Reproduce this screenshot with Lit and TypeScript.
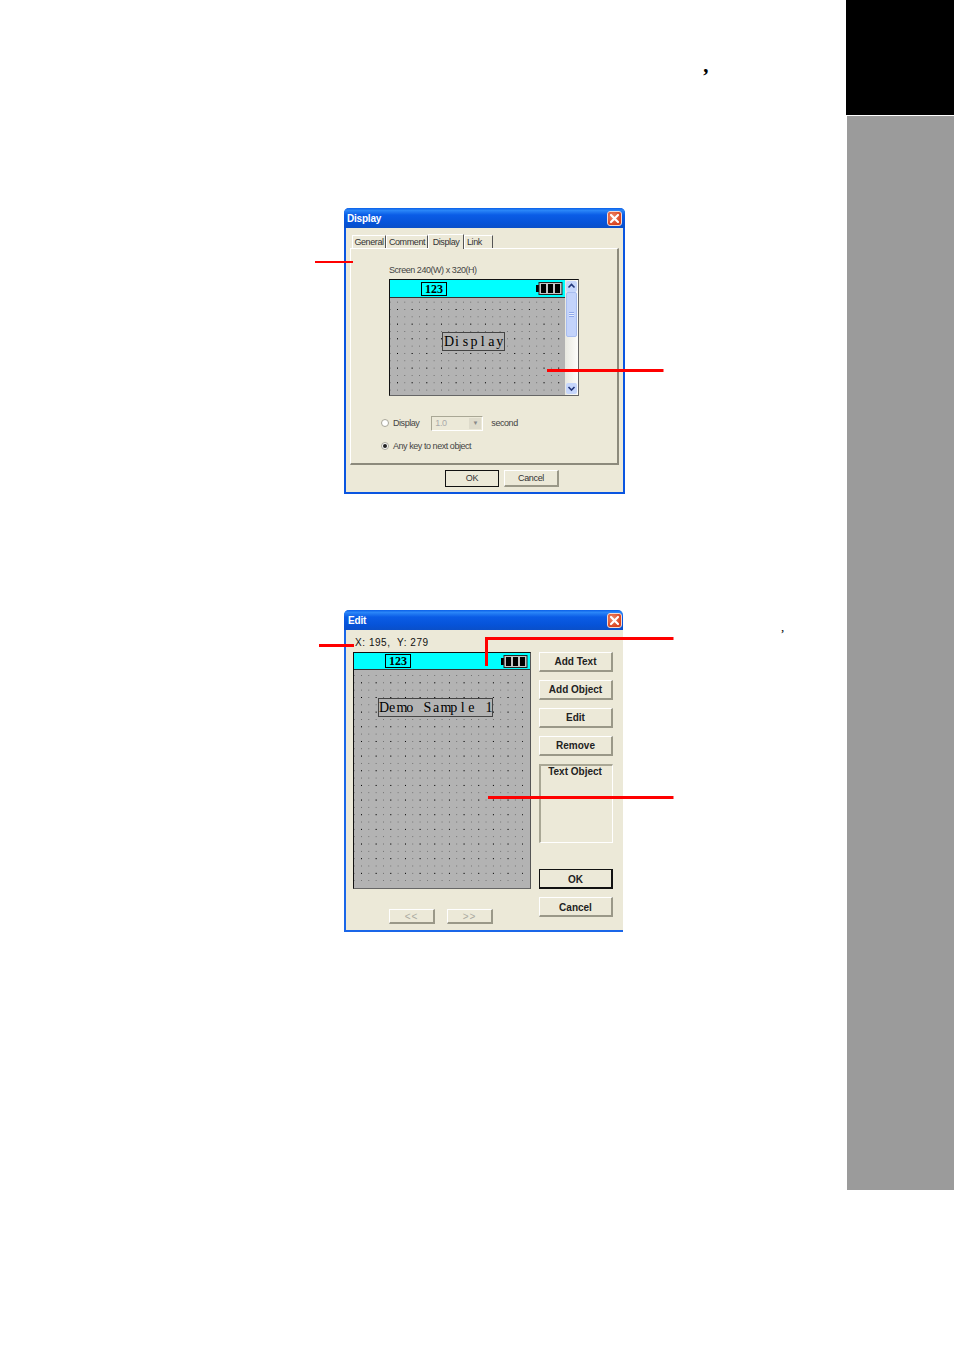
import { LitElement, html, css, svg } from "lit";
import { customElement } from "lit/decorators.js";

const battery = html`<svg class="battery" viewBox="0 0 27 13" width="27" height="13">
  <rect x="0" y="3" width="3" height="7" fill="#000"/>
  <rect x="3" y="0.5" width="23" height="12" fill="#c4c4c4" stroke="#222" stroke-width="1"/>
  <rect x="5" y="2" width="5" height="9" fill="#000"/>
  <rect x="12" y="2" width="5" height="9" fill="#000"/>
  <rect x="19" y="2" width="5" height="9" fill="#000"/>
</svg>`;

const closeBtn = html`<span class="close"><svg viewBox="0 0 15 15" width="15" height="15"><path d="M4 4l7 7M11 4l-7 7" stroke="#fff" stroke-width="2.2" stroke-linecap="round"/></svg></span>`;

const arrow = (d: string) => html`<span class="sb-btn"><svg viewBox="0 0 11 11" width="11" height="11"><path d="${d}" fill="none" stroke="#23377a" stroke-width="1.6"/></svg></span>`;

const cells = (text: string) => [...text].map((c) => html`<span class="cell">${c}</span>`);

@customElement("app-root")
export class AppRoot extends LitElement {
  static styles = css`
    :host { display: block; width: 954px; height: 1352px; background: #fff; font-family: "Liberation Sans", Arial, sans-serif; }
    .page { position: relative; display: grid; grid-template-columns: 846px 108px; width: 954px; height: 1352px; overflow: hidden; }
    .main { padding: 208px 0 0 344px; display: flex; flex-direction: column; gap: 116px; align-items: flex-start; }
    .side { display: flex; flex-direction: column; }
    .side-black { height: 115px; background: #000; }
    .side-grey { height: 1074px; margin: 1px 0 0 1px; background: #9b9b9b; }

    .dialog { box-sizing: border-box; display: flex; flex-direction: column; background: #ece9d8; color: #222; border-radius: 5px 5px 0 0; }
    .d1 { width: 281px; height: 286px; border: solid #0a55e0; border-width: 0 2px 2px 2px; }
    .d2 { width: 279px; height: 322px; border: solid #1a66e8; border-width: 0 0 2px 2px; }
    .title { flex: none; box-sizing: border-box; height: 20px; margin: 0 -2px; padding: 1px 3px 0; display: flex; align-items: center; justify-content: space-between;
      background: linear-gradient(#0a5fe8 0, #2a86f8 12%, #0a5ce6 35%, #0653d8 75%, #0a4fc8 100%); border-radius: 5px 5px 0 0;
      color: #fff; font-size: 10px; font-weight: 700; letter-spacing: -.2px; }
    .d2 .title { margin-right: 0; padding: 0 1px 0 4px; }
    .close { width: 15px; height: 15px; border: 1px solid #f4d8d0; border-radius: 3px; background: radial-gradient(circle at 35% 35%, #f08a6a, #d8431f 70%); display: block; box-sizing: border-box; }
    .close svg { display: block; margin: -1px; }

    .tabs { flex: none; display: flex; align-items: flex-end; height: 20px; padding: 0 0 0 6px; font-size: 9px; letter-spacing: -.4px; color: #333; }
    .tab { height: 13px; display: flex; align-items: center; justify-content: center; border-right: 1px solid #555; border-top: 1px solid #fff; border-left: 1px solid #fff; box-sizing: border-box; }
    .tab.on { height: 15px; padding-bottom: 1px; background: #ece9d8; margin-bottom: -1px; position: relative; }
    .t-general { width: 34px; }
    .t-comment { width: 42px; }
    .t-display { width: 36px; }
    .t-link { width: 29px; justify-content: flex-start; padding-left: 2px; }
    .panel { flex: none; box-sizing: border-box; width: 269px; height: 217px; margin-left: 4px; border: solid; border-width: 1px 2px 2px 1px; border-color: #fff #8c8a7c #8c8a7c #fff;
      padding: 15px 0 0 38px; font-size: 9px; letter-spacing: -.45px; color: #444; display: flex; flex-direction: column; }
    .panel .cap { height: 15px; line-height: 12px; }

    .screen { box-sizing: border-box; flex: none; display: flex; flex-direction: column; border: 1px solid; border-color: #111 #666 #666 #111; background: #b3b3b3; }
    .s1 { width: 190px; height: 117px; flex-direction: row; }
    .s2 { width: 178px; height: 237px; border-right-color: #555; }
    .lcd { flex: 1; display: flex; flex-direction: column; min-width: 0; }
    .head { flex: none; box-sizing: border-box; height: 18px; background: #00ffff; border-bottom: 1px solid #333; display: flex; align-items: center; justify-content: space-between; padding: 0 2px 0 31px; }
    .s2 .head { height: 17px; }
    .badge { box-sizing: border-box; width: 26px; height: 14px; border: 1px solid #000; font: 700 12px/12px "Liberation Serif", serif; text-align: center; color: #000; letter-spacing: 0; }
    .battery { display: block; }
    .dots { flex: 1; box-sizing: border-box; background-image:
        radial-gradient(circle at .5px .5px, #000 .6px, transparent .7px),
        radial-gradient(circle at .5px .5px, #666 .55px, transparent .65px);
      background-size: 14.66px 14.66px, 7.33px 7.33px; background-position: 7px 11px, 7px 3.7px; background-clip: content-box; background-origin: padding-box; padding-bottom: 4px; display: flex; flex-direction: column; align-items: flex-start; }
    .s2 .dots { background-position: 7px 12.33px, 7px 5px; padding: 0 7px 7px 0; }
    .obj { box-sizing: border-box; border: 1px solid #444; height: 19px; padding-top: 1px; display: flex; align-items: center; font-family: "Liberation Serif", serif; color: #000; background: #b3b3b3; font-size: 14px; letter-spacing: 0; }
    .cell { flex: none; width: 8.8px; text-align: center; white-space: pre; }
    .o1 { width: 63px; margin: 34px 0 0 52px; padding-left: 1px; }
    .o1 .cell { width: 8.6px; }
    .o2 { width: 115px; margin: 28px 0 0 24px; }

    .sb { flex: none; width: 13px; background: linear-gradient(90deg, #e8e8e0, #fdfdfb); display: flex; flex-direction: column; padding: 1px 0; box-sizing: border-box; }
    .sb-btn { display: block; width: 11px; height: 11px; margin: 0 1px; background: #c6d6fb; border-radius: 2px; flex: none; }
    .sb-btn svg { display: block; }
    .thumb { display: flex; align-items: center; justify-content: center; width: 11px; height: 45px; margin: 0 1px; background: #c3d3fb; border: 1px solid #a8bdf0; box-sizing: border-box; border-radius: 2px; }
    .thumb i { display: block; width: 5px; height: 5px; background: repeating-linear-gradient(#8fa8ea 0 1px, #e8eefc 1px 2px); }
    .sb-gap { flex: 1; }

    .row { display: flex; align-items: center; color: #444; font-size: 9px; letter-spacing: -.45px; }
    .r1 { margin: 20px 0 0 -8px; height: 14px; }
    .r2 { margin: 9px 0 0 -8px; height: 14px; }
    .radio { box-sizing: border-box; width: 8px; height: 8px; border-radius: 50%; background: #fff; border: 1px solid #a8a698; margin-right: 4px; display: flex; align-items: center; justify-content: center; }
    .radio i { display: block; width: 4px; height: 4px; border-radius: 50%; background: #222; }
    .combo { box-sizing: border-box; width: 52px; height: 15px; margin: 0 8px 0 12px; border: 1px solid #a9a795; border-right-color: #fff; border-bottom-color: #fff; display: flex; align-items: center; justify-content: space-between; padding: 0 1px 0 3px; color: #aaa; }
    .combo b { display: flex; align-items: center; justify-content: center; width: 12px; height: 11px; background: #dedbcb; color: #888; font-size: 6px; font-weight: 400; }

    .foot { display: flex; gap: 5px; padding: 5px 0 0 99px; }
    .btn { box-sizing: border-box; display: flex; align-items: center; justify-content: center; background: #ece9d8; border: solid; border-width: 1px 2px 2px 1px; border-color: #fff #9a9888 #9a9888 #fff; color: #333; }
    .foot .btn { width: 55px; height: 17px; font-size: 9px; letter-spacing: -.35px; padding-bottom: 1px; }
    .foot .ok { width: 54px; border-width: 1px; border-color: #111; }

    .d2 .pos { flex: none; height: 22px; padding: 3px 0 0 9px; box-sizing: border-box; display: flex; align-items: center; font-size: 10px; letter-spacing: .55px; color: #111; white-space: pre; }
    .edit { display: grid; grid-template-columns: 178px 74px; column-gap: 8px; padding-left: 7px; }
    .left { display: flex; flex-direction: column; }
    .tools { display: flex; flex-direction: column; }
    .tools .btn { width: 74px; height: 20px; font-size: 10px; font-weight: 700; color: #222; margin-bottom: 8px; }
    .listbox { box-sizing: border-box; width: 74px; height: 79px; border: solid; border-width: 2px 1px 1px 2px; border-color: #a9a795 #fff #fff #a9a795; padding-right: 3px; font-size: 10px; font-weight: 700; text-align: center; color: #222; margin-bottom: 26px; }
    .tools .ok { border-color: #111; }
    .tools .low { padding-top: 2px; }
    .nav { display: flex; gap: 12px; padding: 20px 0 0 36px; }
    .nav .btn { width: 46px; height: 15px; font-size: 10px; color: #aaa9a0; letter-spacing: 1px; }

    .overlay { position: absolute; inset: 0; pointer-events: none; }
    .comma { position: absolute; font-family: "Liberation Serif", serif; color: #000; line-height: 1; }
    .c1 { left: 704px; top: 54px; font-size: 22px; font-weight: 700; font-style: italic; }
    .c2 { left: 781px; top: 620px; font-size: 13px; }
  `;

  render() {
    return html`<div class="page">
      <div class="main">
        <section class="dialog d1">
          <div class="title"><span>Display</span>${closeBtn}</div>
          <div class="tabs">
            <span class="tab t-general">General</span>
            <span class="tab t-comment">Comment</span>
            <span class="tab on t-display">Display</span>
            <span class="tab t-link">Link</span>
          </div>
          <div class="panel">
            <div class="cap">Screen 240(W) x 320(H)</div>
            <div class="screen s1">
              <div class="lcd">
                <div class="head"><span class="badge">123</span>${battery}</div>
                <div class="dots"><span class="obj o1">${cells("Display")}</span></div>
              </div>
              <div class="sb">
                ${arrow("M2.5 6.5L5.5 3.5L8.5 6.5")}
                <span class="thumb"><i></i></span>
                <span class="sb-gap"></span>
                ${arrow("M2.5 4L5.5 7L8.5 4")}
              </div>
            </div>
            <div class="row r1"><span class="radio"></span>Display<span class="combo">1.0<b>▼</b></span>second</div>
            <div class="row r2"><span class="radio"><i></i></span>Any key to next object</div>
          </div>
          <div class="foot"><span class="btn ok">OK</span><span class="btn">Cancel</span></div>
        </section>

        <section class="dialog d2">
          <div class="title"><span>Edit</span>${closeBtn}</div>
          <div class="pos">X: 195,  Y: 279</div>
          <div class="edit">
            <div class="left">
              <div class="screen s2">
                <div class="head"><span class="badge">123</span>${battery}</div>
                <div class="dots"><span class="obj o2">${cells("Demo Sample 1")}</span></div>
              </div>
              <div class="nav"><span class="btn">&lt;&lt;</span><span class="btn">&gt;&gt;</span></div>
            </div>
            <div class="tools">
              <span class="btn">Add Text</span>
              <span class="btn">Add Object</span>
              <span class="btn">Edit</span>
              <span class="btn">Remove</span>
              <div class="listbox">Text Object</div>
              <span class="btn ok low">OK</span>
              <span class="btn low">Cancel</span>
            </div>
          </div>
        </section>
      </div>
      <aside class="side"><div class="side-black"></div><div class="side-grey"></div></aside>
      <div class="overlay">
        <svg width="954" height="1352" fill="none" stroke="#f00">
          ${svg`<path stroke-width="2" d="M315 262H353"/><path stroke-width="3" d="M547 370.5H663.5"/><path stroke-width="3" d="M319 645.5H354"/><path stroke-width="3" d="M486.5 666V638.5H673.5"/><path stroke-width="3" d="M488 797.5H673.5"/>`}
        </svg>
        <span class="comma c1">,</span>
        <span class="comma c2">,</span>
      </div>
    </div>`;
  }
}
